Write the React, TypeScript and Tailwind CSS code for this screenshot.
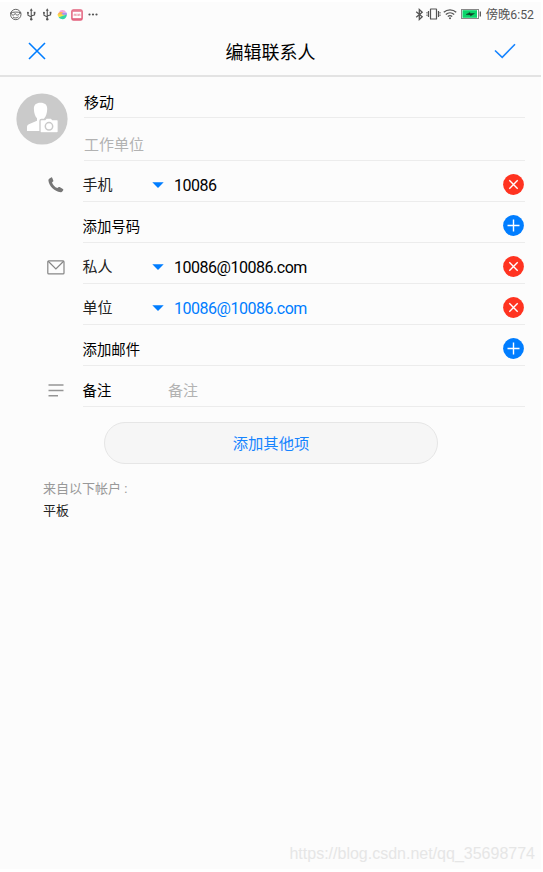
import type { ReactNode } from "react";

function StatusBar() {
  return (
    <div className="flex h-[25px] items-center justify-between pl-[9px] pr-[7px] text-[#555]">
      <div className="flex items-center gap-[3px]">
        <svg width="13" height="13" viewBox="0 0 13 13" fill="none" stroke="currentColor" strokeWidth="0.9">
          <circle cx="6.8" cy="6.5" r="5.2" />
          <path d="M1.2 5.2C4 3.8 9 3.6 12.2 5M2.2 5.2c.3 2.4 3.2 2.6 4 .2.6 2.4 3.8 2.2 4.800-.4M4 9c1.600 1.300 4 1.300 5.500-.3" />
        </svg>
        <Usb />
        <Usb />
        <svg width="12" height="13" viewBox="0 0 13 13">
          <path d="M3 4.200A4.500 4.500 0 0 1 11 4L7 5z" fill="#f9a3da" />
          <path d="M1.800 7C2 4 5 3 8 4.500L7 7z" fill="#ffb050" />
          <path d="M6 5.500c2-1.500 4-1.500 5.800-1V7H7z" fill="#a892f2" />
          <path d="M1.800 6.500C4 5.500 7 7.500 10 6.500L6 9.500 2.600 9C2 8.200 1.800 7.400 1.800 6.500z" fill="#f7df48" />
          <path d="M2.800 9.500C6 9.500 8 6.500 11.800 6.800 11.500 11.500 6.500 13.500 2.800 9.500z" fill="#35d6a4" />
        </svg>
        <svg width="12" height="12" viewBox="0 0 12 12">
          <rect x="0.900" y="0.900" width="10.200" height="10.200" rx="1.600" fill="#fff" stroke="#e2607c" strokeWidth="1.500" />
          <path d="M1.200 1.200h9.600v1.600H1.200z" fill="#e87b91" />
          <path d="M3.200 7V5.200h1.500V7M6 7V4.600M7.400 7V5.200h1.500V7" stroke="#e58b9c" strokeWidth="0.8" fill="none" />
          <path d="M1 9.200h10v1.600H1z" fill="#e2607c" />
        </svg>
        <svg width="11" height="3" viewBox="0 0 11 3" fill="currentColor" className="ml-[2px]">
          <circle cx="1.500" cy="1.500" r="1.100" />
          <circle cx="5" cy="1.500" r="1.100" />
          <circle cx="8.500" cy="1.500" r="1.100" />
        </svg>
      </div>
      <div className="flex items-center">
        <svg width="9" height="13" viewBox="0 0 9 13" fill="none" stroke="currentColor" strokeWidth="1.300">
          <path d="M1.200 3.800l6 5-2.900 2.700v-10l2.900 2.700-6 5" />
        </svg>
        <svg width="15" height="12" viewBox="0 0 15 12" fill="none" stroke="currentColor" strokeWidth="1.200" className="ml-[2px]">
          <rect x="4.500" y="1" width="6" height="10" rx="0.300" />
          <path d="M2.500 3v6M12.500 3v6" />
          <path d="M1 4v1.500M1 6.500V8M14 4v1.500M14 6.500V8" strokeWidth="1" />
        </svg>
        <svg width="14" height="12" viewBox="0 0 14 12" fill="none" stroke="currentColor" strokeWidth="1.300" className="ml-[2px]">
          <path d="M.8 4.300C4.300 1 9.700 1 13.200 4.300M2.800 6.500c2.400-2.100 6-2.100 8.400 0M4.800 8.500c1.300-1 3.100-1 4.400 0" />
          <circle cx="7" cy="10.300" r="1" fill="currentColor" stroke="none" />
        </svg>
        <svg width="21" height="10" viewBox="0 0 21 10" className="ml-[4px]">
          <rect x="0.500" y="0.500" width="17" height="9" fill="#fff" stroke="#888" />
          <rect x="1.500" y="1.200" width="14.500" height="7.600" fill="#0bd56a" />
          <path d="M5 5.500l4-2.100V4.500h4.500L9.500 7V5.900z" fill="#143d28" stroke="#143d28" strokeWidth="0.4" />
          <path d="M19.300 2.500v5" stroke="#555" strokeWidth="1.300" />
        </svg>
        <span className="ml-[4px] pt-[2px] text-[12.300px] leading-none">傍晚6:52</span>
      </div>
    </div>
  );
}

function Usb() {
  return (
    <svg width="12.500" height="13" viewBox="0 0 12 13" fill="none" stroke="currentColor" strokeWidth="1.100">
      <path d="M6 2v9M2.700 5v2.200L6 9M9.300 5v1.800L6 8" />
      <path d="M6 .3l1.500 2.500h-3z" fill="currentColor" stroke="none" />
      <circle cx="6" cy="11.300" r="1.200" fill="currentColor" stroke="none" />
      <circle cx="2.700" cy="4.800" r="1" fill="currentColor" stroke="none" />
      <path d="M8.400 3.800h1.800v1.800H8.400z" fill="currentColor" stroke="none" />
    </svg>
  );
}

function RoundButton({ kind }: { kind: "add" | "remove" }) {
  return (
    <svg width="21" height="21" viewBox="0 0 21 21" strokeWidth="1.400" stroke="#fff" className="mb-[2px] mr-[1.500px] shrink-0">
      <circle cx="10.500" cy="10.500" r="10.400" fill={kind === "add" ? "#007dff" : "#ff3320"} stroke="none" />
      <path d={kind === "add" ? "M10.500 4.500v12M4.500 10.500h12" : "M6.300 6.300l8.400 8.400M14.700 6.300l-8.400 8.400"} />
    </svg>
  );
}

const icons: Record<string, ReactNode> = {
  phone: (
    <svg width="16" height="16" viewBox="0 0 16 16" fill="#777" className="mb-px ml-px">
      <path d="M1.200 1.700 3.100.5c.5-.3 1-.1 1.200.4l1 2.500c.2.500.1.900-.3 1.200l-1 .8c.9 2.500 2.700 4.500 5.400 5.700l1-.9c.4-.3.800-.4 1.200-.1l3.300 1.900c.5.300.6.800.3 1.300l-.9 1.300c-.4.600-.9.800-1.600.7C6.200 14.500.700 8.500.4 3.200c0-.7.200-1.100.8-1.500z" />
    </svg>
  ),
  mail: (
    <svg width="18" height="15" viewBox="0 0 18 15" fill="none" stroke="#858585" strokeWidth="1.200">
      <rect x="0.800" y="0.900" width="16.200" height="13" rx="1" />
      <path d="M1.200 1.300l7.700 7.600 7.700-7.600" />
    </svg>
  ),
  note: (
    <svg width="17" height="13" viewBox="0 0 17 13" stroke="#959595" strokeWidth="1.400">
      <path d="M.5 1h15M.5 6.500h15M.5 11.700h9.500" />
    </svg>
  ),
};

interface Field {
  label: string;
  icon?: string;
  value?: string;
  active?: boolean;
  action?: "add" | "remove";
}

const fields: Field[] = [
  { label: "手机", icon: "phone", value: "10086", action: "remove" },
  { label: "添加号码", action: "add" },
  { label: "私人", icon: "mail", value: "10086@10086.com", action: "remove" },
  { label: "单位", value: "10086@10086.com", active: true, action: "remove" },
  { label: "添加邮件", action: "add" },
];

function FieldRow({ label, icon, value, active, action }: Field) {
  return (
    <div className="flex h-[41px]">
      <div className="flex w-[82.500px] items-center pl-[47px] pt-2">{icon && icons[icon]}</div>
      <div className="flex flex-1 items-center border-b border-[#ececec] pt-[8px]">
        {value ? (
          <>
            <span className="w-[69.500px] pt-px text-[15px] text-[#222]">{label}</span>
            <svg width="12" height="6" viewBox="0 0 12 6" fill="#007dff">
              <path d="M.3.200h11.400L6 6z" />
            </svg>
            <span
              className={`ml-[10px] pt-[2px] text-[16px] tracking-[-0.48px] ${active ? "text-[#007dff]" : "text-black"}`}
            >
              {value}
            </span>
          </>
        ) : (
          <span className="pt-[3px] text-[14.400px] text-black">{label}</span>
        )}
        <span className="flex-1" />
        {action && <RoundButton kind={action} />}
      </div>
    </div>
  );
}

export default function App() {
  return (
    <div className="h-[872px] w-[543px] overflow-hidden bg-white pt-[2px] font-[Roboto,'Noto_Sans_CJK_SC',sans-serif]">
      <main className="flex h-[867px] w-[541px] flex-col bg-[#fcfcfc]">
        <StatusBar />

        <header className="flex h-[50px] items-center justify-between border-b-2 border-[#e3e3e3] pl-[28px] pr-[25px]">
          <svg width="18" height="18" viewBox="0 0 18 18" stroke="#007dff" strokeWidth="1.600">
            <path d="M1 1l16 16M17 1L1 17" />
          </svg>
          <h1 className="pl-px pt-[3px] text-[18px] leading-none text-black">编辑联系人</h1>
          <svg width="22" height="16" viewBox="0 0 22 16" fill="none" stroke="#1684ff" strokeWidth="1.600">
            <path d="M1 7.500l7.200 6.800L21 1.300" />
          </svg>
        </header>

        <section className="pr-4">
          <div className="flex">
            <div className="w-[84px] pl-[16px] pt-[16px]">
              <svg width="52" height="52" viewBox="0 0 52 52">
                <circle cx="26" cy="26" r="25.600" fill="#cacaca" />
                <path
                  d="M24.500 9.800c4.400 0 6.800 2.100 6.700 6.200-.1 4.300-1.200 7.400-3 9.300v2.900l3 1.500v8.300H11v-4.200c.2-1.400 1-2.200 2.400-2.800l7.600-3.300v-2.400c-1.800-1.900-3-5-3.100-9.300-.1-4.100 2.200-6.200 6.600-6.200z"
                  fill="#fff"
                />
                <path
                  d="M25.500 26.500h3.500l1.300-1.500h4.900l1.300 1.500H41a1.300 1.300 0 0 1 1.300 1.300V38.500a1.300 1.300 0 0 1-1.300 1.300H25.300A1.300 1.300 0 0 1 24 38.500V27.800c0-.8.5-1.300 1.500-1.300z"
                  fill="#fff"
                  stroke="#cacaca"
                  strokeWidth="1.300"
                />
                <circle cx="33" cy="33.300" r="3.700" fill="#fff" stroke="#cacaca" strokeWidth="1.500" />
              </svg>
            </div>
            <div className="flex-1">
              <div className="flex h-[41px] items-center border-b border-[#ececec] pt-[12px] text-[15px] text-black">移动</div>
              <div className="flex h-[43px] items-center border-b border-[#ececec] pt-[12px] text-[15px] text-[#b2b2b2]">
                工作单位
              </div>
            </div>
          </div>

          {fields.map((field) => (
            <FieldRow key={field.label} {...field} />
          ))}

          <div className="flex h-[41px]">
            <div className="flex w-[82.500px] items-center pl-[48px] pt-2">{icons.note}</div>
            <div className="flex flex-1 items-center border-b border-[#ececec] pt-[10px]">
              <span className="w-[85.500px] pt-px text-[14.400px] text-black">备注</span>
              <span className="text-[15px] text-[#b2b2b2]">备注</span>
            </div>
          </div>
        </section>

        <button className="ml-[104px] mt-[15px] h-[42px] w-[334px] rounded-full border border-[#e6e6e6] bg-[#f6f6f6] pt-[2px] text-[15.300px] text-[#1684ff]">
          添加其他项
        </button>

        <section className="ml-[43px] mt-[14px] text-[13px] leading-[22px]">
          <p className="text-[#999]">来自以下帐户 :</p>
          <p className="text-[#222]">平板</p>
        </section>

        <footer className="mr-[6px] mt-auto pb-[5px] text-right font-['Liberation_Sans',sans-serif] text-[16px] leading-5 text-[#e6e6e6]">
          https://blog.csdn.net/qq_35698774
        </footer>
      </main>
    </div>
  );
}
